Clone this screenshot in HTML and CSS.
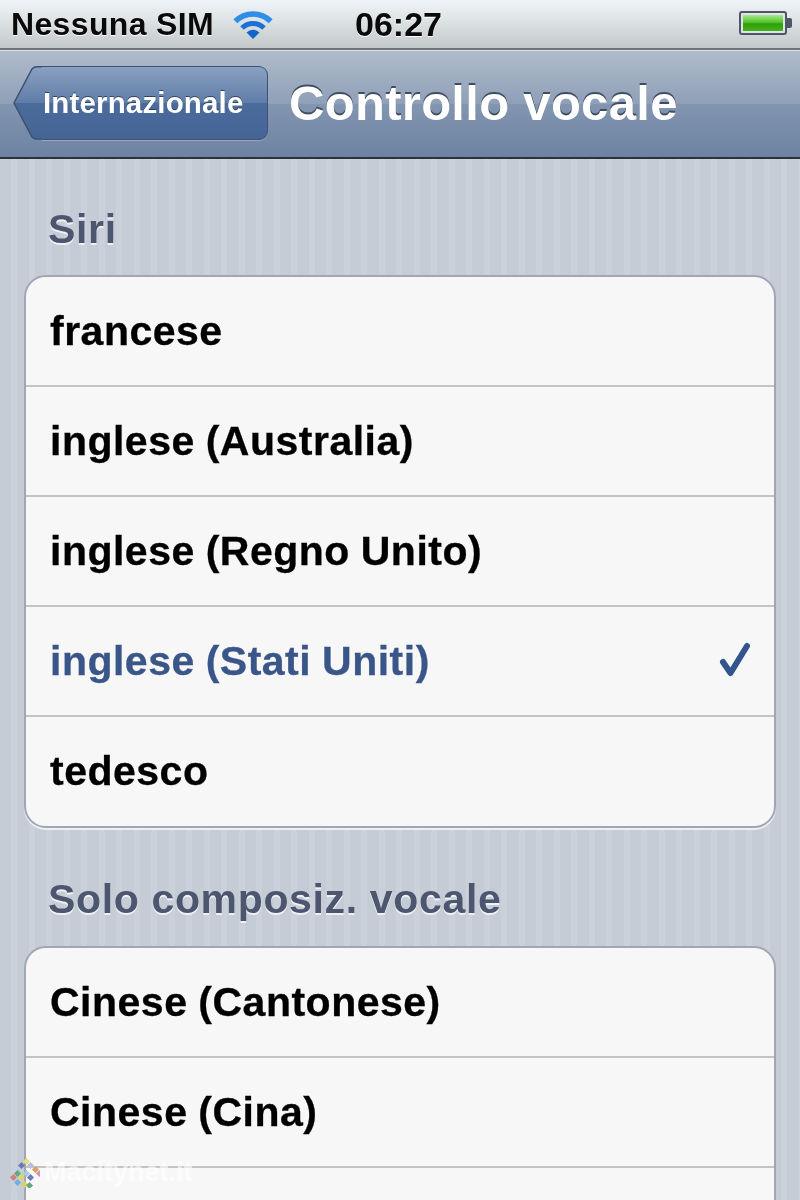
FILE: index.html
```html
<!DOCTYPE html>
<html>
<head>
    <title>Controllo vocale</title>
    <link rel="stylesheet" href="styles.css">
</head>
<body>
  <div class="screen">
    <div class="status-bar">
      <span class="carrier">Nessuna SIM</span>
      <svg class="wifi" width="42" height="32" viewBox="0 0 42 32">
        <path d="M3.3 12.3 A25 25 0 0 1 38.7 12.3" fill="none" stroke="#2f8ee8" stroke-width="5.5"/>
        <path d="M10 19 A15.5 15.5 0 0 1 32 19" fill="none" stroke="#1b70d8" stroke-width="5"/>
        <path d="M21 30 L14.5 23.5 A9.2 9.2 0 0 1 27.5 23.5 Z" fill="#1565c8"/>
      </svg>
      <span class="clock">06:27</span>
      <div class="battery"><div class="battery-fill"></div></div>
      <div class="battery-tip"></div>
    </div>

    <div class="nav-bar">
      <div class="back-btn">
        <svg class="back-arrow" width="29" height="74" viewBox="0 0 29 74">
          <defs>
            <linearGradient id="backfill" x1="0" y1="0" x2="0" y2="1">
              <stop offset="0" stop-color="#8aa0c0"/>
              <stop offset="0.5" stop-color="#5f7da8"/>
              <stop offset="0.5" stop-color="#4a6b9c"/>
              <stop offset="1" stop-color="#456595"/>
            </linearGradient>
          </defs>
          <path d="M29 0.8 L24 0.8 Q21 0.8 19 3 L1 37 L19 71 Q21 73 24 73 L29 73 Z" fill="url(#backfill)"/>
          <path d="M29 0.8 L24 0.8 Q21 0.8 19 3 L1 37 L19 71 Q21 73 24 73 L29 73" fill="none" stroke="#3d5170" stroke-width="1.5"/>
        </svg>
        <span class="back-label">Internazionale</span>
      </div>
      <h1 class="nav-title">Controllo vocale</h1>
    </div>

    <div class="content">
      <h2 class="group-title">Siri</h2>
      <ul class="group">
        <li>francese</li>
        <li>inglese (Australia)</li>
        <li>inglese (Regno Unito)</li>
        <li class="selected">
          inglese (Stati Uniti)
          <svg class="check" width="34" height="38" viewBox="0 0 34 38">
            <path d="M5 20 L12.5 31 L29 4" fill="none" stroke="#33548c" stroke-width="6" stroke-linecap="round" stroke-linejoin="round"/>
          </svg>
        </li>
        <li>tedesco</li>
      </ul>

      <h2 class="group-title">Solo composiz. vocale</h2>
      <ul class="group">
        <li>Cinese (Cantonese)</li>
        <li>Cinese (Cina)</li>
        <li></li>
      </ul>
    </div>

    <div class="watermark">
      <svg width="30" height="30" viewBox="0 0 30 30">
        <rect x="14" y="1" width="5" height="5" transform="rotate(45 16.5 3.5)" fill="#e8dc80"/>
        <rect x="9" y="5" width="5" height="5" transform="rotate(45 11.5 7.5)" fill="#6f78b8"/>
        <rect x="18" y="5" width="5" height="5" transform="rotate(45 20.5 7.5)" fill="#b8c0e0"/>
        <rect x="23" y="9" width="5" height="5" transform="rotate(45 25.5 11.5)" fill="#e0a060"/>
        <rect x="27" y="13" width="5" height="5" transform="rotate(45 29.5 15.5)" fill="#d890b0"/>
        <rect x="5" y="13" width="5" height="5" transform="rotate(45 7.5 15.5)" fill="#60a880"/>
        <rect x="9" y="17" width="5" height="5" transform="rotate(45 11.5 19.5)" fill="#e0d860"/>
        <rect x="14" y="13" width="5" height="5" transform="rotate(45 16.5 15.5)" fill="#a0d0e0"/>
        <rect x="18" y="17" width="5" height="5" transform="rotate(45 20.5 19.5)" fill="#7078c0"/>
        <rect x="1" y="17" width="5" height="5" transform="rotate(45 3.5 19.5)" fill="#d08080"/>
        <rect x="5" y="22" width="5" height="5" transform="rotate(45 7.5 24.5)" fill="#70b0e0"/>
        <rect x="12" y="24" width="5" height="5" transform="rotate(45 14.5 26.5)" fill="#e0d060"/>
        <rect x="17" y="25" width="5" height="5" transform="rotate(45 19.5 27.5)" fill="#60a880"/>
      </svg>
      <span class="watermark-text">Macitynet.it</span>
    </div>
  </div>
</body>
</html>
```

FILE: styles.css
```css
* {
    margin: 0;
    padding: 0;
    box-sizing: border-box;
}

body {
    font-family: "Liberation Sans", Arial, sans-serif;
    background-color: #c5ccd6;
}

.screen {
    position: relative;
    width: 800px;
    height: 1200px;
    overflow: hidden;
    filter: blur(0.5px);
}

.status-bar {
    height: 50px;
    display: flex;
    align-items: center;
    padding: 0 8px 0 11px;
    background: linear-gradient(#eef5f8, #e3e8ea 30%, #c3c8ca);
    border-bottom: 2px solid #6e7378;
    font-weight: bold;
    font-size: 32px;
    letter-spacing: 0.35px;
    color: #0a0a0a;
    text-shadow: 0 1px 0 #fff;
}

.carrier {
    width: 221px;
}

.wifi {
    width: 42px;
    height: 32px;
    margin-top: 2px;
}

.clock {
    margin-left: 81px;
    font-size: 34px;
    letter-spacing: 0;
}

.battery {
    margin-left: auto;
    margin-top: -2px;
    width: 48px;
    height: 24px;
    padding: 2px;
    background: #dfe4e8;
    border: 2px solid #50566a;
    border-radius: 3px;
}

.battery-fill {
    height: 100%;
    background: linear-gradient(#a6e88a, #56c52e 45%, #2f9e08 55%, #44b21a);
}

.battery-tip {
    width: 5px;
    height: 10px;
    margin-top: -2px;
    background: #50566a;
    border-radius: 0 2px 2px 0;
}

.nav-bar {
    height: 109px;
    display: flex;
    align-items: center;
    padding: 0 0 3px 13px;
    background: linear-gradient(#b0bccc, #8f9fb7 50%, #8295b0 50.5%, #6d83a4);
    border-top: 1px solid #dde2e8;
    border-bottom: 2px solid #2d3138;
}

.back-btn {
    display: flex;
    height: 74px;
}

.back-arrow {
    flex: none;
    width: 29px;
    height: 74px;
}

.back-label {
    width: 226px;
    height: 74px;
    line-height: 71px;
    padding-left: 1px;
    font-size: 29.5px;
    letter-spacing: 0.15px;
    font-weight: bold;
    color: #fff;
    text-shadow: 0 -1px 0 #33445f;
    background: linear-gradient(#8aa0c0, #5f7da8 50%, #4a6b9c 50%, #456595);
    border: 1.5px solid #3d5170;
    border-left: none;
    border-radius: 0 9px 9px 0;
    box-shadow: 0 1px 0 rgba(255, 255, 255, 0.25);
}

.nav-title {
    margin-left: 21px;
    font-size: 49px;
    letter-spacing: 0.3px;
    font-weight: bold;
    color: #fff;
    text-shadow: 0 -2px 0 #3f4c62;
}

.content {
    height: 1041px;
    padding: 0 24px;
    background: repeating-linear-gradient(90deg, #c5ccd6 0, #c5ccd6 11.4px, #cad1da 11.4px, #cad1da 17.5px);
}

.group-title {
    height: 118px;
    padding: 46px 0 0 24px;
    font-size: 41px;
    letter-spacing: 0.65px;
    font-weight: bold;
    color: #4d566f;
    line-height: 50px;
    text-shadow: 0 2px 0 #eef1f4;
}

.content > .group-title:first-child {
    height: 116px;
    padding-top: 45px;
}

.group {
    list-style: none;
    background: #f7f7f7;
    border: 2px solid #a0a7b2;
    border-radius: 22px;
    box-shadow: 0 2px 0 #eef1f4;
    overflow: hidden;
}

.group li {
    height: 110px;
    display: flex;
    align-items: center;
    justify-content: space-between;
    padding: 0 22px 0 24px;
    font-size: 41px;
    letter-spacing: 0.5px;
    word-spacing: -1px;
    -webkit-text-stroke: 0.3px currentColor;
    font-weight: bold;
    color: #000;
    border-bottom: 2px solid #c4c4c4;
}

.group li:last-child {
    height: 109px;
    border-bottom: none;
}

.group li.selected {
    color: #3a5689;
}

.watermark {
    position: absolute;
    left: 10px;
    top: 1157px;
    display: flex;
    align-items: center;
    gap: 4px;
}

.watermark-text {
    font-size: 27px;
    font-weight: bold;
    color: rgba(255, 255, 255, 0.6);
}
```
